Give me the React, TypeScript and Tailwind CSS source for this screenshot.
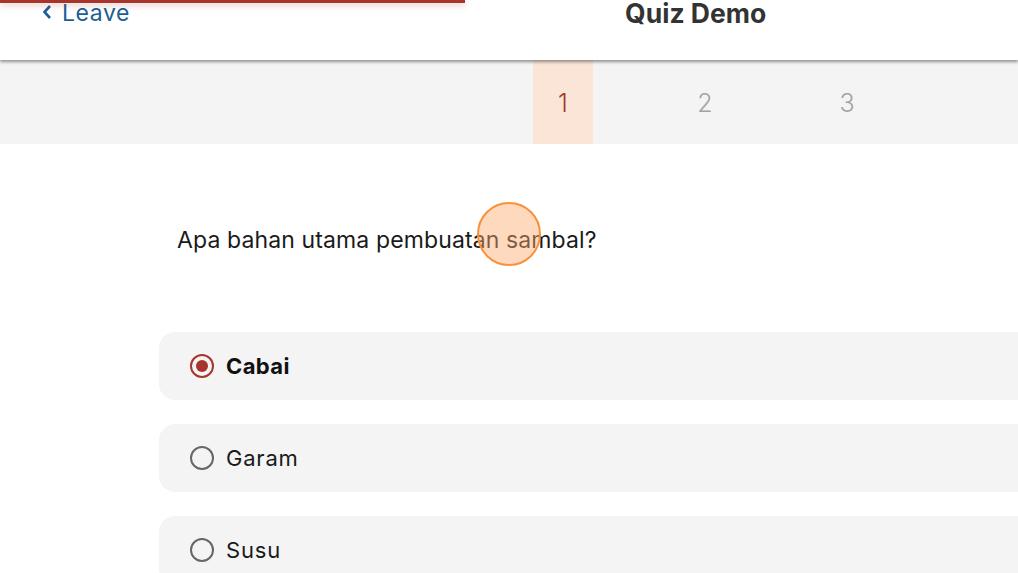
import React, { useState } from 'react';

const options = ['Cabai', 'Garam', 'Susu'];

const App: React.FC = () => {
    const [selected, setSelected] = useState(0);
    const [active, setActive] = useState(1);

    return (
        <div className="relative w-[1018px] h-[573px] overflow-hidden bg-white font-['Inter',sans-serif]">
            {/* header */}
            <div className="relative z-10 h-[60px] bg-white shadow-[0_2px_3px_rgba(0,0,0,0.4)]">
                <div className="absolute top-0 left-0 w-[465px] h-[3px] bg-[#a8352b] shadow-[0_2px_6px_rgba(168,53,43,0.35)]" />
                <div className="flex items-start h-full">
                    <button className="ml-[42px] mt-[-1px] flex items-center gap-[10px] text-[23px] leading-[28px] text-[#1a5f96] tracking-[0.6px]">
                        <svg width="10" height="16" viewBox="0 0 10 16" className="mt-[-2px]">
                            <path d="M8 2 L2.5 8 L8 14" fill="none" stroke="#1a5f96" strokeWidth="2.6" />
                        </svg>
                        Leave
                    </button>
                    <h1 className="ml-[495px] mt-[-3px] text-[26.5px] leading-[32px] font-bold text-[#333333]">Quiz Demo</h1>
                </div>
            </div>

            {/* question tabs */}
            <div className="flex h-[84px] bg-[#f4f4f4] pl-[533px] gap-[82px]">
                {[1, 2, 3].map(n => (
                    <button
                        key={n}
                        onClick={() => setActive(n)}
                        className={n === active
                            ? 'w-[60px] h-full flex items-center justify-center pt-[4px] text-[25px] font-light text-[#a8352b] bg-[#fae5d7]'
                            : 'w-[60px] h-full flex items-center justify-center pt-[4px] text-[25px] font-light text-[#a3a3a3]'}
                    >
                        {n}
                    </button>
                ))}
            </div>

            {/* question */}
            <div className="pl-[177px] pt-[81px] text-[23px] leading-[30px] tracking-[0.12px] text-[#1a1a1a]">
                Apa bahan utama pembuatan sambal?
            </div>

            {/* answers */}
            <div className="ml-[159px] mt-[77px] flex flex-col gap-[24px]">
                {options.map((opt, i) => (
                    <button
                        key={opt}
                        onClick={() => setSelected(i)}
                        className="w-[900px] h-[68px] rounded-[16px] bg-[#f4f4f4] flex items-center pl-[31px] gap-[12px] text-left"
                    >
                        {selected === i ? (
                            <span className="w-[24px] h-[24px] rounded-full border-[2.5px] border-[#a8352b] flex items-center justify-center">
                                <span className="w-[12px] h-[12px] rounded-full bg-[#a8352b]" />
                            </span>
                        ) : (
                            <span className="w-[24px] h-[24px] rounded-full border-[2px] border-[#666666]" />
                        )}
                        <span className={selected === i
                            ? 'text-[22px] tracking-[0.4px] font-bold text-[#111111]'
                            : 'text-[22px] tracking-[0.8px] text-[#1a1a1a]'}>
                            {opt}
                        </span>
                    </button>
                ))}
            </div>

            {/* touch indicator */}
            <div className="absolute left-[477px] top-[202px] w-[64px] h-[64px] rounded-full border-2 border-[#f7923a] bg-[rgba(253,170,110,0.45)] pointer-events-none" />
        </div>
    );
};

export default App;
